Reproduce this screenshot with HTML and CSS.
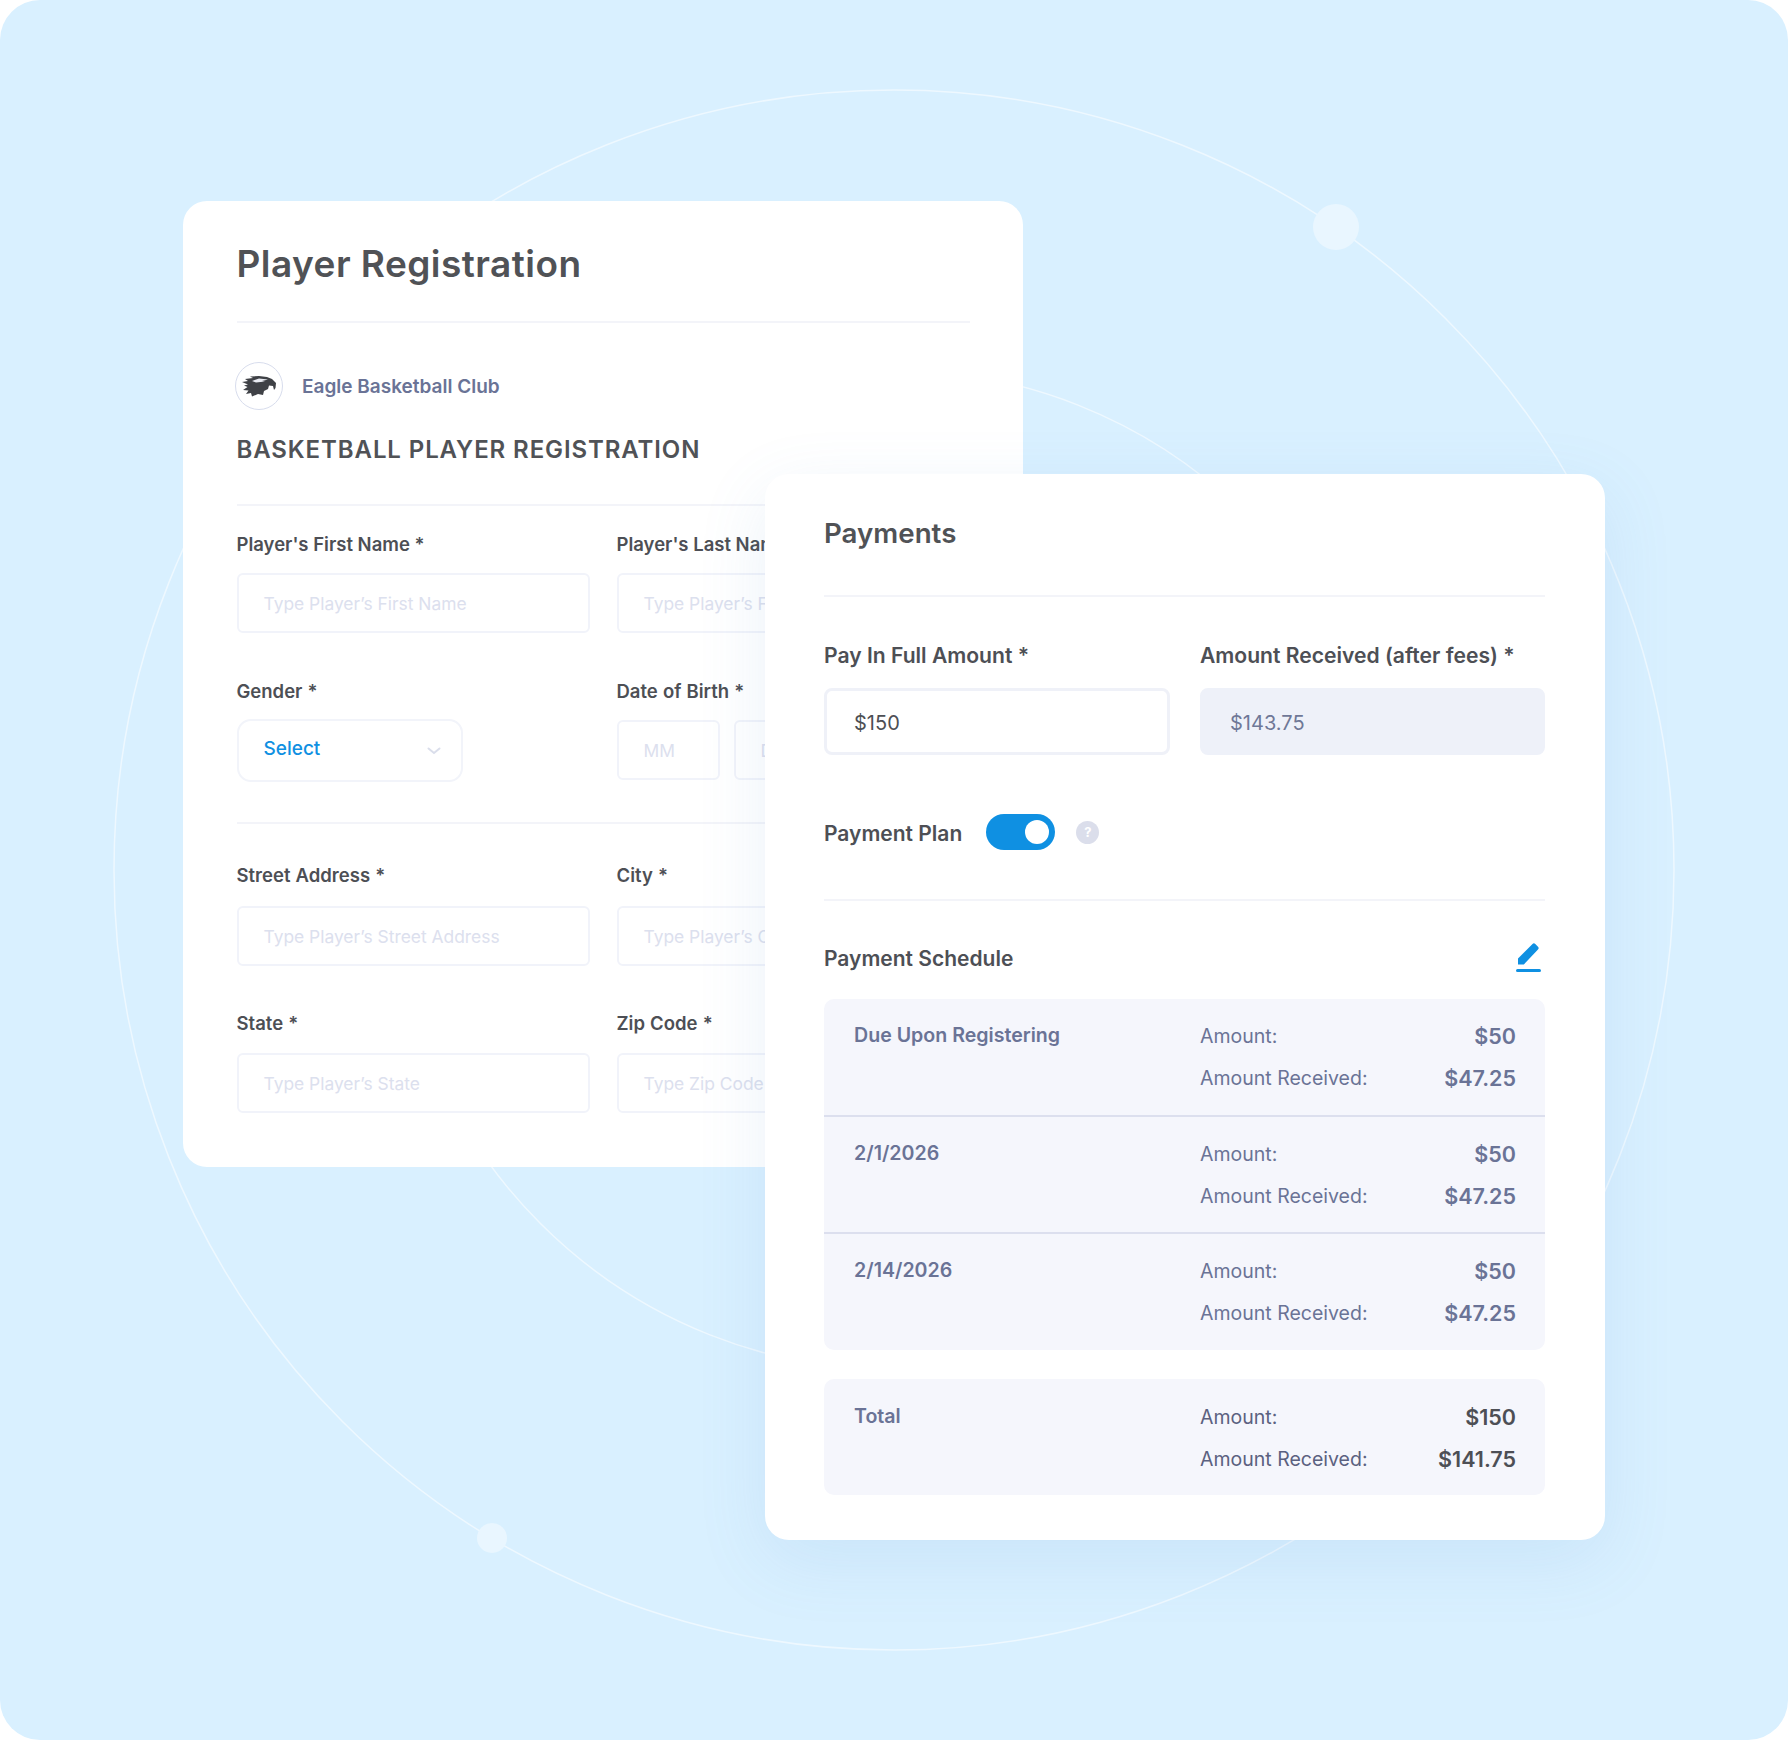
FILE: index.html
```html
<!DOCTYPE html>
<html lang="en">
<head>
  <meta charset="UTF-8">
  <title>Player Registration and Payments</title>
  <link rel="stylesheet" href="styles.css">
</head>
<body>
  <div class="stage">
    <!-- background rings -->
    <svg class="rings" width="1788" height="1740" viewBox="0 0 1788 1740">
      <circle cx="894" cy="870" r="780" fill="none" stroke="#fff" stroke-opacity="0.55" stroke-width="1.5"/>
      <circle cx="894" cy="870" r="500" fill="none" stroke="#fff" stroke-opacity="0.55" stroke-width="1.5"/>
      <circle cx="1336" cy="227" r="23" fill="#e9f6ff"/>
      <circle cx="492" cy="1538" r="15" fill="#e9f6ff"/>
    </svg>

    <section class="card card-register">
      <h1>Player Registration</h1>
      <hr class="rule rule-title">
      <div class="club">
        <span class="club-logo">
          <svg width="36" height="24" viewBox="0 0 36 24">
            <path fill="#3f4146" d="M1 8 7 7 4 5 12 4 9 2.500 18 2 26 3 31 5 35 9 34.500 14 33 16 32 12 28 11.500 27 15 23 17 22 21 17 20 11 22.500 10 19 5 20 7.500 16.500 2 16 6.500 13 3 11.500 7 10.500Z"/>
            <path fill="#e9ebf2" d="M11 7 18 4.500 27 5.500 21 7 24 7.500 15 8.500Z"/>
          </svg>
        </span>
        <span class="club-name">Eagle Basketball Club</span>
      </div>
      <h2>BASKETBALL PLAYER REGISTRATION</h2>
      <hr class="rule rule-heading">
      <div class="field-row field-row-first">
        <div class="field">
          <label>Player's First Name *</label>
          <div class="input placeholder">Type Player’s First Name</div>
        </div>
        <div class="field">
          <label>Player's Last Name *</label>
          <div class="input placeholder">Type Player’s First Name</div>
        </div>
      </div>
      <div class="field-row field-row-date">
        <div class="field">
          <label>Gender *</label>
          <div class="select">
            <span>Select</span>
            <svg width="14" height="8" viewBox="0 0 14 8"><path d="M1.500 1.500 7 6 12.500 1.500" fill="none" stroke="#dadeeb" stroke-width="2" stroke-linecap="round"/></svg>
          </div>
        </div>
        <div class="field">
          <label>Date of Birth *</label>
          <div class="date-parts">
            <div class="input placeholder date-part">MM</div>
            <div class="input placeholder date-part">DD</div>
          </div>
        </div>
      </div>
      <hr class="rule rule-address">
      <div class="field-row field-row-street">
        <div class="field">
          <label>Street Address *</label>
          <div class="input placeholder">Type Player’s Street Address</div>
        </div>
        <div class="field">
          <label>City *</label>
          <div class="input placeholder">Type Player’s City</div>
        </div>
      </div>
      <div class="field-row field-row-last">
        <div class="field">
          <label>State *</label>
          <div class="input placeholder">Type Player’s State</div>
        </div>
        <div class="field">
          <label>Zip Code *</label>
          <div class="input placeholder">Type Zip Code</div>
        </div>
      </div>
    </section>

    <section class="card card-payments">
      <h3>Payments</h3>
      <hr class="rule rule-payments">
      <div class="amount-row">
        <div class="field">
          <label>Pay In Full Amount *</label>
          <div class="amount-box">$150</div>
        </div>
        <div class="field">
          <label>Amount Received (after fees) *</label>
          <div class="amount-box amount-box-off">$143.75</div>
        </div>
      </div>
      <div class="plan-row">
        <span class="plan-label">Payment Plan</span>
        <span class="toggle"><span class="toggle-knob"></span></span>
        <span class="help">?</span>
      </div>
      <hr class="rule rule-plan">
      <div class="schedule-head">
        <span class="plan-label">Payment Schedule</span>
        <svg width="28" height="30" viewBox="0 0 28 30">
          <path fill="#0f90e2" d="M3 21.500V15.500L17.500 1a2 2 0 0 1 2.800 0L23 3.700a2 2 0 0 1 0 2.800L8.800 21.500Z"/>
          <rect x="1" y="26" width="25" height="3" rx="1.500" fill="#0f90e2"/>
        </svg>
      </div>
      <div class="schedule">
        <div class="sched-row">
          <div class="sched-date">Due Upon Registering</div>
          <div class="sched-lines">
            <div class="sched-line"><span>Amount:</span><b>$50</b></div>
            <div class="sched-line"><span>Amount Received:</span><b>$47.25</b></div>
          </div>
        </div>
        <div class="sched-row">
          <div class="sched-date">2/1/2026</div>
          <div class="sched-lines">
            <div class="sched-line"><span>Amount:</span><b>$50</b></div>
            <div class="sched-line"><span>Amount Received:</span><b>$47.25</b></div>
          </div>
        </div>
        <div class="sched-row sched-row-end">
          <div class="sched-date">2/14/2026</div>
          <div class="sched-lines">
            <div class="sched-line"><span>Amount:</span><b>$50</b></div>
            <div class="sched-line"><span>Amount Received:</span><b>$47.25</b></div>
          </div>
        </div>
      </div>
      <div class="schedule schedule-total">
        <div class="sched-row">
          <div class="sched-date">Total</div>
          <div class="sched-lines">
            <div class="sched-line"><span>Amount:</span><b>$150</b></div>
            <div class="sched-line"><span>Amount Received:</span><b>$141.75</b></div>
          </div>
        </div>
      </div>
    </section>
  </div>
</body>
</html>
```

FILE: styles.css
```css
/* Base */
* { margin: 0; padding: 0; box-sizing: border-box; }
body {
  background: #fff;
  font-family: 'Inter', 'Liberation Sans', sans-serif;
  color: #4d4f55;
}
.stage {
  position: relative;
  width: 1788px;
  height: 1740px;
  background: #d9f0ff;
  border-radius: 40px;
  overflow: hidden;
}
.rings { position: absolute; top: 0; left: 0; }

/* Cards */
.card {
  position: absolute;
  background: #fff;
  border-radius: 24px;
}
.card-register {
  left: 183px;
  top: 201px;
  width: 840px;
  height: 966px;
  padding: 0 53px 0 53.500px;
}
.card-payments {
  left: 765px;
  top: 474px;
  width: 840px;
  height: 1066px;
  padding: 0 60px 0 59px;
  box-shadow: 0 20px 70px rgba(90, 150, 205, 0.12);
}

.rule { border: none; border-top: 2px solid #f3f4f9; }

/* Left card */
h1 {
  font-size: 37px;
  font-weight: 600;
  letter-spacing: 0.45px;
  line-height: 44px;
  margin-top: 41px;
  color: #505256;
}
.rule-title { margin-top: 35px; }
.club {
  display: flex;
  align-items: center;
  gap: 19px;
  margin-top: 39px;
}
.club-logo {
  width: 48px;
  height: 48px;
  margin-left: -1.500px;
  border: 1px solid #d8dded;
  border-radius: 50%;
  display: flex;
  align-items: center;
  justify-content: center;
}
.club-name { font-size: 19px; font-weight: 600; color: #6a7396; }
h2 {
  font-size: 24px;
  font-weight: 600;
  letter-spacing: 0.9px;
  line-height: 30px;
  margin-top: 25px;
  color: #505256;
}
.rule-heading { margin-top: 39px; }
.field-row {
  display: grid;
  grid-template-columns: 353px 353px;
  gap: 27px;
}
.field-row-first { margin-top: 27px; }
.field-row-date { margin-top: 47px; }
.rule-address { margin-top: 40px; }
.field-row-street { margin-top: 40px; }
.field-row-last { margin-top: 46px; }
label {
  display: block;
  margin-top: -1px;
  font-size: 18.500px;
  font-weight: 600;
  word-spacing: 0.500px;
  line-height: 24px;
  color: #4d4f55;
}
.field-row-first label { word-spacing: 0; }
.input {
  height: 60px;
  margin-top: 19px;
  padding: 0 25px;
  border: 2px solid #f1f3fa;
  border-radius: 6px;
  display: flex;
  align-items: center;
  overflow: hidden;
  white-space: nowrap;
}
.field-row-first .input, .field-row-date .input { margin-top: 17px; }
.field-row-last .input { margin-top: 18px; }
.placeholder { font-size: 17.400px; color: #dce0ee; }
.select {
  width: 226px;
  height: 63px;
  margin-top: 16px;
  padding: 0 20px 0 25px;
  border: 2px solid #f2f4fa;
  border-radius: 14px;
  display: flex;
  align-items: center;
  justify-content: space-between;
  font-size: 19px;
  font-weight: 500;
  color: #0f90e2;
}
.select span { margin-top: -4px; }
.date-parts { display: flex; gap: 14px; }
.date-part { width: 103px; }

/* Payments card */
h3 {
  font-size: 27.700px;
  font-weight: 600;
  line-height: 34px;
  margin-top: 42px;
  color: #505256;
}
.rule-payments { margin-top: 45px; }
.amount-row {
  display: grid;
  grid-template-columns: 346px 345px;
  gap: 30px;
  margin-top: 47px;
}
.card-payments label { font-size: 21.100px; word-spacing: 0; margin: 0; }
.amount-box {
  height: 67px;
  margin-top: 20px;
  padding: 2px 27px 0;
  border: 3px solid #eff1f8;
  border-radius: 8px;
  display: flex;
  align-items: center;
  font-size: 20px;
  color: #4d4f55;
}
.amount-box-off {
  background: #eef1f9;
  border-color: #eef1f9;
  color: #6f7897;
}
.plan-row {
  display: flex;
  align-items: center;
  margin-top: 59px;
  height: 36px;
}
.plan-label { font-size: 21px; font-weight: 600; color: #4d4f55; }
.plan-row .plan-label { margin-top: 2px; }
.toggle {
  width: 69px;
  height: 36px;
  margin-left: 24px;
  padding: 6px 6px;
  background: #0f90e2;
  border-radius: 18px;
  display: flex;
  justify-content: flex-end;
}
.toggle-knob {
  width: 24px;
  height: 24px;
  background: #fff;
  border-radius: 50%;
}
.help {
  width: 23px;
  height: 23px;
  margin-left: 21px;
  background: #dbdeeb;
  border-radius: 50%;
  font-size: 13px;
  font-weight: 700;
  line-height: 23px;
  text-align: center;
  color: #fff;
}
.rule-plan { margin-top: 49px; }
.schedule-head {
  display: flex;
  align-items: center;
  justify-content: space-between;
  margin-top: 39px;
  padding-right: 2px;
  height: 36px;
}
.schedule {
  margin-top: 23px;
  background: #f5f6fc;
  border-radius: 10px;
}
.schedule-total { margin-top: 29px; }
.sched-row {
  display: flex;
  height: 117px;
  padding: 24px 29px 0 30px;
  border-top: 2px solid #dcdfee;
}
.sched-row:first-child { border-top: none; height: 116px; }
.sched-row-end { height: 118px; }
.schedule-total .sched-row { padding-top: 25px; }
.sched-date {
  width: 346px;
  margin-top: -1px;
  font-size: 19.600px;
  font-weight: 600;
  line-height: 26px;
  color: #6a7396;
}
.sched-lines { flex: 1; }
.sched-line {
  display: flex;
  justify-content: space-between;
  height: 42px;
  font-size: 19.500px;
  line-height: 26px;
  color: #6a7396;
}
.sched-line b { font-size: 21.500px; font-weight: 600; }
.schedule-total .sched-line b { color: #4d4f55; }
.schedule-total .sched-line span { color: #5b6180; }
```
